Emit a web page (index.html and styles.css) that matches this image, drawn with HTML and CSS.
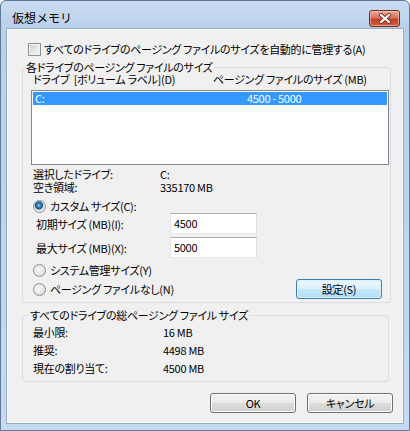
FILE: index.html
```html
<!doctype html>
<html lang="ja">
<head>
    <meta charset="utf-8">
    <title>仮想メモリ</title>
    <link rel="stylesheet" href="styles.css">
</head>
<body>
    <div class="win">
        <div class="title">
            <span class="title-text">仮想メモリ</span>
            <span class="close">
                <svg width="14" height="11" viewBox="0 0 14 11">
                    <path d="M3 2 L11 9 M11 2 L3 9" stroke="#7a3022" stroke-width="4" stroke-linecap="round"/>
                    <path d="M3 2 L11 9 M11 2 L3 9" stroke="#fff" stroke-width="2.2" stroke-linecap="round"/>
                </svg>
            </span>
        </div>
        <div class="client">
            <div class="auto"><span class="chk"></span><span>すべてのドライブのページング ファイルのサイズを自動的に管理する(A)</span></div>

            <fieldset class="grp grp1">
                <legend>各ドライブのページング ファイルのサイズ</legend>
                <div class="cols"><span class="c1">ドライブ&nbsp;&nbsp;[ボリューム ラベル](D)</span><span>ページング ファイルのサイズ (MB)</span></div>
                <div class="list">
                    <div class="item"><span class="c1">C:</span><span>4500 - 5000</span></div>
                </div>
                <div class="info"><span class="k">選択したドライブ:</span><span>C:</span></div>
                <div class="info"><span class="k">空き領域:</span><span>335170 MB</span></div>
                <div class="radio on custom"><span class="dot"></span>カスタム サイズ(C):</div>
                <div class="field"><span class="k">初期サイズ (MB)(I):</span><span class="box">4500</span></div>
                <div class="field second"><span class="k">最大サイズ (MB)(X):</span><span class="box">5000</span></div>
                <div class="bottom">
                    <div class="radios">
                        <div class="radio"><span class="dot"></span>システム管理サイズ(Y)</div>
                        <div class="radio"><span class="dot"></span>ページング ファイルなし(N)</div>
                    </div>
                    <button class="btn def">設定(S)</button>
                </div>
            </fieldset>

            <fieldset class="grp grp2">
                <legend>すべてのドライブの総ページング ファイル サイズ</legend>
                <div class="sum"><span class="k">最小限:</span><span>16 MB</span></div>
                <div class="sum"><span class="k">推奨:</span><span>4498 MB</span></div>
                <div class="sum"><span class="k">現在の割り当て:</span><span>4500 MB</span></div>
            </fieldset>

            <div class="actions">
                <button class="btn">OK</button>
                <button class="btn">キャンセル</button>
            </div>
        </div>
    </div>
</body>
</html>
```

FILE: styles.css
```css
* {
    margin: 0;
    padding: 0;
    box-sizing: border-box;
}

body {
    background: #fff;
    font-family: "Noto Sans CJK JP", sans-serif;
    font-size: 11px;
    letter-spacing: -0.3px;
    color: #000;
    font-feature-settings: "palt";
    white-space: nowrap;
}

.win {
    width: 410px;
    height: 431px;
    display: flex;
    flex-direction: column;
    padding: 0 6px 7px 6px;
    border: 1px solid #63799a;
    border-radius: 6px 6px 0 0;
    background: linear-gradient(#cadcf1, #b9d0ea 28px, #bdd4ed 220px, #c6dbf1);
}

.title {
    height: 28px;
    display: flex;
    align-items: center;
    justify-content: space-between;
    padding: 6px 3px 0 5px;
}

.title-text {
    font-size: 12px;
    line-height: 14px;
    letter-spacing: 0;
    font-feature-settings: normal;
}

.close {
    width: 31px;
    height: 17px;
    display: flex;
    align-items: center;
    justify-content: center;
    border: 1px solid #6d2d20;
    border-radius: 3px;
    background: linear-gradient(#e9a996, #d67561 45%, #c2432a 55%, #cf5c3f);
    box-shadow: inset 0 0 0 1px rgba(255, 220, 210, 0.5);
}

.client {
    flex: 1;
    background: #f0f0f0;
    border: 1px solid #f9fafc;
    box-shadow: 0 0 0 1px #93aac8;
    padding-top: 12px;
}

.auto {
    height: 14px;
    line-height: 14px;
    display: flex;
    align-items: center;
    margin-left: 20px;
}

.chk {
    width: 13px;
    height: 13px;
    margin-right: 3px;
    border: 1px solid #8e8f8f;
    background: linear-gradient(135deg, #cdd0d5, #f6f6f6);
    box-shadow: inset 0 0 0 1px #f4f4f4;
}

.grp {
    border: 1px solid #d5dfe5;
    border-radius: 3px;
    margin-left: 14px;
    padding: 0 0 3px 9px;
    min-width: 0;
}

.grp legend {
    line-height: 12px;
    padding: 0 1px;
}

.grp1 {
    width: 369px;
    margin-top: 5px;
}

.grp1 legend {
    margin-left: -7px;
}

.cols {
    height: 12px;
    line-height: 12px;
    display: flex;
    padding-left: 1px;
}

.cols .c1 {
    width: 180px;
}

.list {
    width: 358px;
    height: 75px;
    margin: 5px 0 0 -1px;
    padding: 1px;
    border: 1px solid #828790;
    background: #fff;
}

.item {
    height: 13px;
    line-height: 13px;
    display: flex;
    background: #3399ff;
    color: #fff;
}

.item .c1 {
    width: 214px;
    padding-left: 2px;
}

.info {
    height: 12px;
    line-height: 12px;
    display: flex;
    padding-left: 1px;
}

.list + .info {
    margin-top: 3px;
}

.info + .info {
    margin-top: 1px;
}

.info .k {
    width: 127px;
}

.radio {
    height: 14px;
    line-height: 14px;
    display: flex;
    align-items: center;
    padding-left: 1px;
}

.custom {
    margin-top: 6px;
}

.dot {
    width: 13px;
    height: 13px;
    margin-right: 4px;
    border: 1px solid #8e8f8f;
    border-radius: 50%;
    background: radial-gradient(circle at 40% 40%, #f8f8f8, #d6d6d6);
}

.on .dot {
    background: radial-gradient(circle at 45% 40%, #a6dcf8 0, #3f88bb 1.5px, #1e5a8c 3.5px, #bfcad4 4.5px, #efefef 5.5px);
}

.field {
    height: 21px;
    display: flex;
    align-items: center;
    padding-left: 4px;
}

.field.second {
    margin-top: 3px;
}

.field .k {
    width: 134px;
}

.box {
    width: 87px;
    height: 21px;
    line-height: 19px;
    padding-left: 3px;
    background: #fff;
    border: 1px solid;
    border-color: #abadb3 #dbdfe6 #e3e9ef #e2e3ea;
}

.bottom {
    display: flex;
    margin-top: 5px;
    height: 36px;
}

.radios {
    display: flex;
    flex-direction: column;
    gap: 5px;
}

.bottom .btn {
    align-self: flex-end;
    margin: 0 8px 0 auto;
}

.btn {
    width: 86px;
    height: 20px;
    border: 1px solid #707070;
    border-radius: 3px;
    background: linear-gradient(#f2f2f2, #ebebeb 50%, #dddddd 50%, #cfcfcf);
    box-shadow: inset 0 0 0 1px #fbfbfb;
    font: inherit;
    letter-spacing: inherit;
    font-feature-settings: "palt";
    line-height: 16px;
    color: #000;
}

.btn.def {
    border-color: #3c7fb1;
    background: linear-gradient(#ecf6fd, #dcf1fc 50%, #c4e8fc 50%, #b2def6);
    box-shadow: inset 0 0 0 1px #dff1fc;
}

.grp2 {
    width: 367px;
    margin-top: 6px;
    padding-top: 2px;
    padding-bottom: 4px;
}

.grp2 legend {
    margin-left: -3px;
}

.sum {
    height: 18px;
    line-height: 18px;
    display: flex;
    padding-left: 1px;
}

.sum .k {
    width: 130px;
}

.actions {
    display: flex;
    justify-content: flex-end;
    gap: 11px;
    margin-top: 11px;
    padding-right: 9px;
}
```
